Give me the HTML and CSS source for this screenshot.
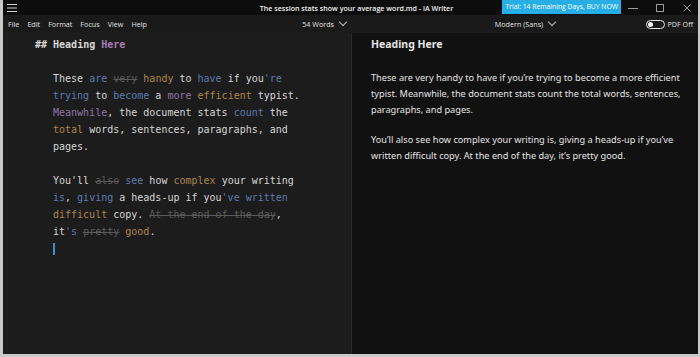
FILE: index.html
```html
<!DOCTYPE html>
<html lang="en">
<head>
    <meta charset="UTF-8">
    <meta name="viewport" content="width=device-width, initial-scale=1.0">
    <title>iA Writer</title>
    <link rel="stylesheet" href="styles.css">
</head>
<body>

<div class="window">
    <div class="titlebar">
        <div class="tb-left">
            <svg class="hamburger" width="10" height="8" viewBox="0 0 10 8">
                <path d="M0 0.5H10M0 4H10M0 7.5H10" stroke="#cfcfcf" stroke-width="1"/>
            </svg>
        </div>
        <div class="title">The session stats show your average word.md - iA Writer</div>
        <div class="tb-right">
            <span class="trial">Trial: 14 Remaining Days, BUY NOW</span>
            <div class="controls">
                <svg width="10" height="10" viewBox="0 0 10 10"><path d="M0 5.5H10" stroke="#9a9a9a" stroke-width="1"/></svg>
                <svg width="10" height="10" viewBox="0 0 10 10"><rect x="1.5" y="1.5" width="7" height="7" fill="none" stroke="#9a9a9a" stroke-width="1"/></svg>
                <svg width="10" height="10" viewBox="0 0 10 10"><path d="M1.5 1.5L8.5 8.5M8.5 1.5L1.5 8.5" stroke="#9a9a9a" stroke-width="1"/></svg>
            </div>
        </div>
    </div>

    <div class="menubar">
        <div class="menu-left">
            <ul class="menus">
                <li>File</li>
                <li>Edit</li>
                <li>Format</li>
                <li>Focus</li>
                <li>View</li>
                <li>Help</li>
            </ul>
            <div class="dropdown">54 Words <span class="chev"></span></div>
        </div>
        <div class="menu-right">
            <div></div>
            <div class="dropdown">Modern (Sans) <span class="chev"></span></div>
            <div class="pdf">
                <span class="toggle"><span class="knob"></span></span>
                PDF Off
            </div>
        </div>
    </div>

    <div class="panes">
        <div class="editor">
            <div class="line heading"><span class="hash">## </span>Heading <span class="c-noun">Here</span></div>
            <div class="line">&nbsp;</div>
            <div class="line">These <span class="c-verb">are</span> <span class="c-filler">very</span> <span class="c-adj">handy</span> to <span class="c-verb">have</span> if you<span class="c-verb">'re</span></div>
            <div class="line"><span class="c-verb">trying</span> to <span class="c-verb">become</span> a <span class="c-adv">more</span> <span class="c-adj">efficient</span> typist.</div>
            <div class="line"><span class="c-adv">Meanwhile</span>, the document stats <span class="c-verb">count</span> the</div>
            <div class="line"><span class="c-adj">total</span> words, sentences, paragraphs, and</div>
            <div class="line">pages.</div>
            <div class="line">&nbsp;</div>
            <div class="line">You'll <span class="c-filler">also</span> <span class="c-verb">see</span> how <span class="c-adj">complex</span> your writing</div>
            <div class="line"><span class="c-verb">is</span>, <span class="c-verb">giving</span> a heads-up if you<span class="c-verb">'ve written</span></div>
            <div class="line"><span class="c-adj">difficult</span> copy. <span class="c-filler">At the end of the day</span>,</div>
            <div class="line">it<span class="c-verb">'s</span> <span class="c-filler">pretty</span> <span class="c-adj">good</span>.</div>
            <div class="line"><span class="cursor"></span></div>
        </div>
        <div class="preview">
            <h2>Heading Here</h2>
            <p>These are very handy to have if you’re trying to become a more efficient<br>typist. Meanwhile, the document stats count the total words, sentences,<br>paragraphs, and pages.</p>
            <p>You’ll also see how complex your writing is, giving a heads-up if you’ve<br>written difficult copy. At the end of the day, it’s pretty good.</p>
        </div>
    </div>
</div>

</body>
</html>
```

FILE: styles.css
```css
html, body {
    margin: 0;
    height: 100%;
}
body {
    background-color: #c9c9c9;
    font-family: "Open Sans", "Noto Sans", sans-serif;
    overflow: hidden;
}
.window {
    margin-left: 3px;
    margin-right: 2px;
    height: 354px;
    display: flex;
    flex-direction: column;
    background-color: #1c1c1c;
}

/* title bar */
.titlebar {
    flex-shrink: 0;
    height: 15px;
    background-color: #0d0d0d;
    display: grid;
    grid-template-columns: 1fr auto 1fr;
    align-items: center;
    color: #f2f2f2;
}
.tb-left {
    display: flex;
    align-items: center;
    padding-left: 4px;
}
.title {
    font-size: 7.1px;
    font-weight: 600;
    white-space: nowrap;
    padding-left: 12px;
}
.tb-right {
    display: flex;
    justify-content: flex-end;
    align-items: center;
    height: 100%;
}
.trial {
    background-color: #27aee6;
    color: #ffffff;
    font-size: 6.8px;
    height: 14px;
    line-height: 14px;
    padding: 0 3px;
    align-self: flex-start;
    white-space: nowrap;
}
.controls {
    display: flex;
    gap: 17px;
    padding: 0 6px 0 7px;
}

/* menu bar */
.menubar {
    flex-shrink: 0;
    height: 18px;
    display: grid;
    grid-template-columns: 349px 1fr;
    background-color: #1a1a1a;
    color: #e0e0e0;
    font-size: 7.2px;
}
.menu-left {
    display: flex;
    justify-content: space-between;
    align-items: center;
    padding: 0 6px 0 5px;
}
.menus {
    list-style: none;
    margin: 0;
    padding: 0;
    display: flex;
    gap: 8px;
}
.dropdown {
    display: flex;
    align-items: center;
    gap: 6px;
}
.chev {
    width: 5px;
    height: 5px;
    border-right: 1px solid #bdbdbd;
    border-bottom: 1px solid #bdbdbd;
    transform: rotate(45deg);
    margin-top: -4px;
}
.menu-right {
    display: grid;
    grid-template-columns: 1fr auto 1fr;
    align-items: center;
}
.pdf {
    display: flex;
    justify-content: flex-end;
    align-items: center;
    gap: 2px;
    padding-right: 5px;
}
.toggle {
    width: 16px;
    height: 7px;
    border: 1px solid #e6e6e6;
    border-radius: 5px;
    display: flex;
    align-items: center;
    padding-left: 1px;
}
.knob {
    width: 5px;
    height: 5px;
    border-radius: 50%;
    background-color: #f4f4f4;
}

/* panes */
.panes {
    flex: 1;
    min-height: 0;
    overflow: hidden;
    display: grid;
    grid-template-columns: 349px 1fr;
}
.editor {
    background-color: #1c1c1c;
    border-right: 1px solid #2a2a2a;
    padding: 3px 0 0 50px;
    font-family: "DejaVu Sans Mono", monospace;
    font-size: 10px;
    line-height: 17px;
    color: #d6d6d6;
}
.line {
    white-space: pre;
    height: 17px;
}
.heading {
    margin-left: -18px;
    font-weight: bold;
}
.c-verb { color: #5d7aae; }
.c-adj { color: #b0844d; }
.c-adv { color: #8d76a6; }
.c-noun { color: #a97cb8; }
.c-filler {
    color: #5a5a5a;
    text-decoration: line-through;
}
.cursor {
    display: inline-block;
    width: 2px;
    height: 12px;
    background-color: #3d8fc0;
    vertical-align: -3px;
}
.preview {
    background-color: #111111;
    padding: 3px 10px 0 19px;
    color: #e4e4e4;
    font-family: "Noto Sans", sans-serif;
    font-size: 9.2px;
    line-height: 16px;
    white-space: nowrap;
    overflow: hidden;
}
.preview h2 {
    margin: 0 0 18px;
    font-size: 10.5px;
    line-height: 16px;
    font-weight: bold;
}
.preview p {
    margin: 0 0 14px;
}
```
